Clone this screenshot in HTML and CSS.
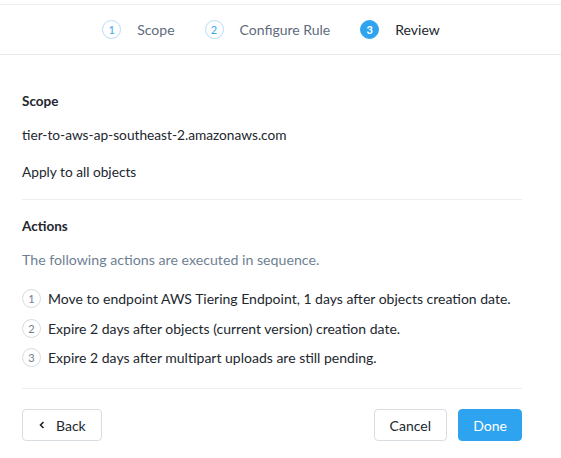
FILE: index.html
```html
<!DOCTYPE html>
<html>
<head>
<meta charset="utf-8">
<link rel="stylesheet" href="styles.css">
</head>
<body>
<div class="page">
  <header class="steps">
    <div class="step done"><span class="num">1</span><span class="label">Scope</span></div>
    <div class="step done"><span class="num">2</span><span class="label">Configure Rule</span></div>
    <div class="step active"><span class="num">3</span><span class="label">Review</span></div>
  </header>
  <main class="content">
    <section class="section">
      <h3 class="title">Scope</h3>
      <p class="line">tier-to-aws-ap-southeast-2.amazonaws.com</p>
      <p class="line">Apply to all objects</p>
    </section>
    <section class="section">
      <h3 class="title">Actions</h3>
      <p class="hint">The following actions are executed in sequence.</p>
      <ol class="actions">
        <li><span class="badge">1</span><span>Move to endpoint AWS Tiering Endpoint, 1 days after objects creation date.</span></li>
        <li><span class="badge">2</span><span>Expire 2 days after objects (current version) creation date.</span></li>
        <li><span class="badge">3</span><span>Expire 2 days after multipart uploads are still pending.</span></li>
      </ol>
    </section>
    <footer class="footer">
      <button class="btn back"><svg width="6" height="8" viewBox="0 0 6 8"><path d="M4.5 1 L1.5 4 L4.5 7" fill="none" stroke="#222" stroke-width="1.6"/></svg>Back</button>
      <div class="right">
        <button class="btn">Cancel</button>
        <button class="btn primary">Done</button>
      </div>
    </footer>
  </main>
</div>
</body>
</html>
```

FILE: styles.css
```css
* { box-sizing: border-box; }
html, body { margin: 0; padding: 0; background: #fff; }
body {
  font-family: Lato, "Open Sans", sans-serif;
  font-size: 13.7px;
  color: #22272e;
}
.page { padding-top: 4px; }
.steps {
  border-top: 1px solid #eceef0;
  border-bottom: 1px solid #e8eaed;
  height: 51px;
  display: flex;
  align-items: center;
  justify-content: center;
  gap: 30px;
  padding-right: 19px;
}
.step { display: flex; align-items: center; gap: 8px; color: #5e6c7c; font-size: 14px; }
.num {
  width: 19px; height: 19px; border-radius: 50%;
  border: 1px solid #b9ddf7;
  color: #3aa7ef;
  display: flex; align-items: center; justify-content: center;
  font-size: 11px;
}
.step .label { margin-left: 8px; }
.step.active { color: #22272e; }
.step.active .num { background: #2ea4f1; border-color: #2ea4f1; color: #fff; font-weight: 700; }
.content { width: 500px; margin-left: 22px; }
.section { border-bottom: 1px solid #eceef0; }
.title { margin: 0; padding-top: 38px; font-size: 13.5px; font-weight: 700; line-height: 16px; }
.section + .section .title { padding-top: 18px; }
.line { margin: 17px 0 0; line-height: 17px; }
.line:last-child { margin-bottom: 19px; margin-top: 20px; }
.hint { margin: 17px 0 0; color: #6e7f92; line-height: 17px; font-size: 14.2px; }
.actions { list-style: none; margin: 21px 0 0; padding: 0 0 21px; font-size: 14px; }
.actions li { display: flex; align-items: center; gap: 7px; height: 19px; margin-bottom: 10.5px; }
.actions li:last-child { margin-bottom: 0; }
.badge {
  width: 19px; height: 19px; border-radius: 50%;
  border: 1px solid #d6dbe0;
  color: #6e7f92; font-size: 11px;
  display: flex; align-items: center; justify-content: center;
  flex: none;
}
.footer { display: flex; justify-content: space-between; align-items: center; padding-top: 20px; }
.right { display: flex; gap: 11px; }
.btn {
  font-family: inherit; font-size: 14px; color: #22272e;
  height: 32px; padding: 0 15px;
  background: #fff; border: 1px solid #d8dde2; border-radius: 4px;
  display: flex; align-items: center; gap: 11px;
}
.btn.back { width: 80px; padding-left: 16px; }
.btn.primary { background: #2ea4f1; border-color: #2ea4f1; color: #fff; width: 64px; justify-content: center; }
```
